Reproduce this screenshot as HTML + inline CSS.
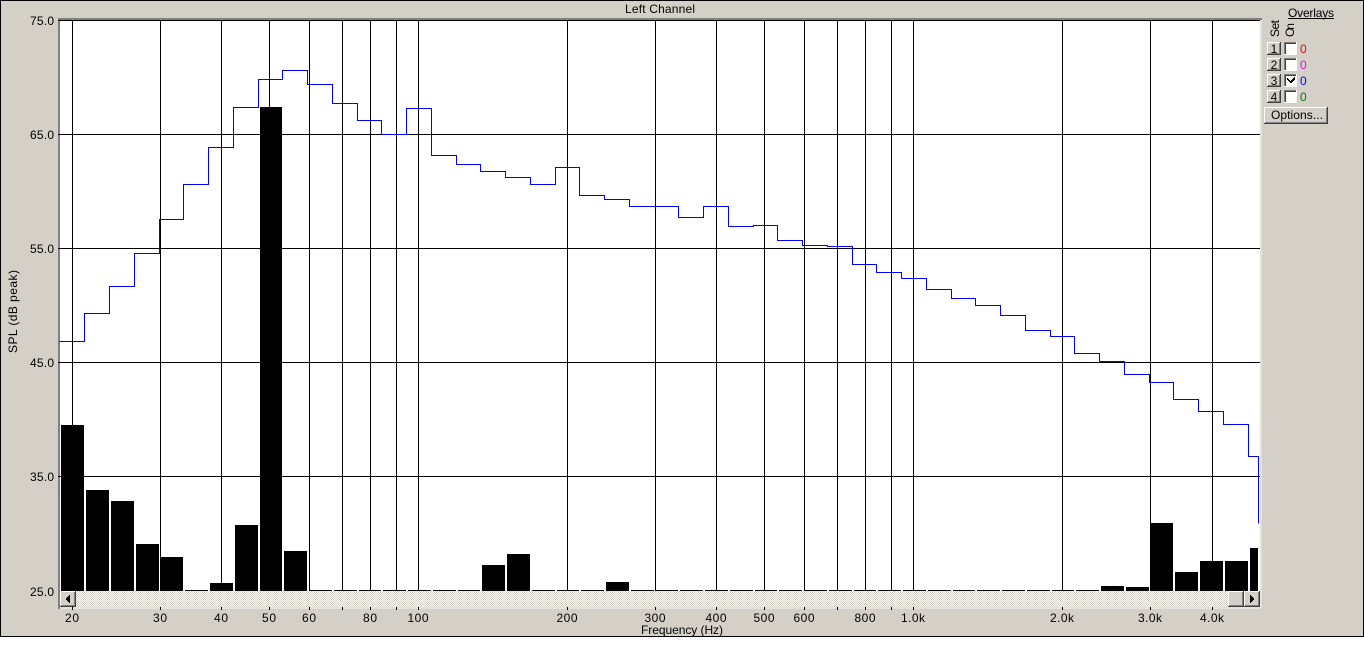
<!DOCTYPE html>
<html><head><meta charset="utf-8"><title>Left Channel</title>
<style>
html,body{margin:0;padding:0;background:#fff;width:1364px;height:649px;overflow:hidden}
svg{display:block;position:absolute;left:0;top:0}
text{font-family:"Liberation Sans",Arial,sans-serif;font-size:12px;fill:#000}
.c{text-anchor:middle}.r{text-anchor:end}
</style></head><body>
<svg width="1364" height="649" viewBox="0 0 1364 649" xmlns="http://www.w3.org/2000/svg">
<defs><pattern id="d" width="2" height="2" patternUnits="userSpaceOnUse"><rect width="2" height="2" fill="#fff"/><rect width="1" height="1" fill="#d4d0c8"/><rect x="1" y="1" width="1" height="1" fill="#d4d0c8"/></pattern></defs>
<g shape-rendering="crispEdges">
<rect width="1364" height="637" fill="#000"/>
<rect x="1" y="1" width="1362" height="635" fill="#d4d0c8"/>
<rect x="58" y="18" width="1204" height="591" fill="#e4e2dd"/>
<rect x="58" y="18" width="1204" height="2" fill="#808080"/>
<rect x="58" y="18" width="2" height="591" fill="#808080"/>
<rect x="60" y="20" width="1200" height="571" fill="#fff"/>
<rect x="60" y="591" width="1200" height="16" fill="url(#d)"/>
<path d="M58 20.5H1260M58 134.5H1260M58 248.5H1260M58 362.5H1260M58 476.5H1260" stroke="#000" fill="none"/>
<path d="M72.500 20V591M160.500 20V591M221.500 20V591M269.500 20V591M309.500 20V591M342.500 20V591M370.500 20V591M396.500 20V591M418.500 20V591M567.500 20V591M655.500 20V591M716.500 20V591M764.500 20V591M804.500 20V591M837.500 20V591M865.500 20V591M891.500 20V591M913.500 20V591M1062.500 20V591M1150.500 20V591M1212.500 20V591" stroke="#000" fill="none"/>
<path d="M72.500 607V610M160.500 607V610M221.500 607V610M269.500 607V610M309.500 607V610M342.500 607V610M370.500 607V610M396.500 607V610M418.500 607V610M567.500 607V610M655.500 607V610M716.500 607V610M764.500 607V610M804.500 607V610M837.500 607V610M865.500 607V610M891.500 607V610M913.500 607V610M1062.500 607V610M1150.500 607V610M1212.500 607V610" stroke="#000" fill="none"/>
<path fill="#000" d="M61 425H84V591H61ZM86 490H109V591H86ZM111 501H134V591H111ZM136 544H159V591H136ZM160 557H183V591H160ZM185 590H208V591H185ZM210 583H233V591H210ZM235 525H258V591H235ZM260 107H282V591H260ZM284 551H307V591H284ZM309 590H332V591H309ZM334 590H357V591H334ZM359 590H381V591H359ZM383 590H406V591H383ZM408 590H431V591H408ZM433 590H456V591H433ZM458 590H480V591H458ZM482 565H505V591H482ZM507 554H530V591H507ZM532 590H555V591H532ZM557 590H579V591H557ZM581 590H604V591H581ZM606 582H629V591H606ZM631 590H654V591H631ZM656 590H678V591H656ZM680 590H703V591H680ZM705 590H728V591H705ZM730 590H753V591H730ZM755 590H777V591H755ZM779 590H802V591H779ZM804 590H827V591H804ZM829 590H852V591H829ZM854 590H876V591H854ZM878 590H901V591H878ZM903 590H926V591H903ZM928 590H951V591H928ZM953 590H975V591H953ZM977 590H1000V591H977ZM1002 590H1025V591H1002ZM1027 590H1050V591H1027ZM1052 590H1074V591H1052ZM1076 590H1099V591H1076ZM1101 586H1124V591H1101ZM1126 587H1149V591H1126ZM1150 523H1173V591H1150ZM1175 572H1198V591H1175ZM1200 561H1223V591H1200ZM1225 561H1248V591H1225ZM1250 548H1258V591H1250Z"/>
<path transform="translate(.5 .5)" fill="none" stroke="#0000ff" d="M59 341H84V313H109V286H134V253H159V219H183V184H208V147H233V107H258V79H282V70H307V84H332V103H357V120H381V134H406V108H431V155H456V164H480V171H505V177H530V184H555V167H579V195H604V199H629V206H678V217H703V206H728V226H753V225H777V240H802V245H827V246H852V264H876V272H901V278H926V289H951V298H975V305H1000V315H1025V330H1050V336H1074V353H1099V361H1124V374H1149V382H1173V399H1198V411H1223V424H1248V456H1258V523"/>
<!-- scrollbar buttons -->
<g>
<rect x="60" y="591" width="16" height="16" fill="#404040"/><rect x="60" y="591" width="15" height="15" fill="#fff"/><rect x="61" y="592" width="14" height="14" fill="#808080"/><rect x="61" y="592" width="13" height="13" fill="#d4d0c8"/>
<rect x="1228" y="591" width="16" height="16" fill="#404040"/><rect x="1228" y="591" width="15" height="15" fill="#fff"/><rect x="1229" y="592" width="14" height="14" fill="#808080"/><rect x="1229" y="592" width="13" height="13" fill="#d4d0c8"/>
<rect x="1244" y="591" width="16" height="16" fill="#404040"/><rect x="1244" y="591" width="15" height="15" fill="#fff"/><rect x="1245" y="592" width="14" height="14" fill="#808080"/><rect x="1245" y="592" width="13" height="13" fill="#d4d0c8"/>
</g>
<path d="M70 595V603H69V602H68V601H67V600H66V598H67V597H68V596H69V595Z" fill="#000"/>
<path d="M1250 595V603H1251V602H1252V601H1253V600H1254V598H1253V597H1252V596H1251V595Z" fill="#000"/>
<!-- numbered buttons -->
<g>
<rect x="1267" y="42" width="14" height="13" fill="#404040"/><rect x="1267" y="42" width="13" height="12" fill="#fff"/><rect x="1268" y="43" width="12" height="11" fill="#808080"/><rect x="1268" y="43" width="11" height="10" fill="#d4d0c8"/>
<rect x="1267" y="58" width="14" height="13" fill="#404040"/><rect x="1267" y="58" width="13" height="12" fill="#fff"/><rect x="1268" y="59" width="12" height="11" fill="#808080"/><rect x="1268" y="59" width="11" height="10" fill="#d4d0c8"/>
<rect x="1267" y="74" width="14" height="13" fill="#404040"/><rect x="1267" y="74" width="13" height="12" fill="#fff"/><rect x="1268" y="75" width="12" height="11" fill="#808080"/><rect x="1268" y="75" width="11" height="10" fill="#d4d0c8"/>
<rect x="1267" y="90" width="14" height="13" fill="#404040"/><rect x="1267" y="90" width="13" height="12" fill="#fff"/><rect x="1268" y="91" width="12" height="11" fill="#808080"/><rect x="1268" y="91" width="11" height="10" fill="#d4d0c8"/>
</g>
<!-- checkboxes -->
<g>
<rect x="1284" y="42" width="13" height="13" fill="#fff"/><rect x="1284" y="42" width="12" height="12" fill="#808080"/><rect x="1285" y="43" width="11" height="11" fill="#404040"/><rect x="1286" y="44" width="10" height="10" fill="#fff"/>
<rect x="1284" y="58" width="13" height="13" fill="#fff"/><rect x="1284" y="58" width="12" height="12" fill="#808080"/><rect x="1285" y="59" width="11" height="11" fill="#404040"/><rect x="1286" y="60" width="10" height="10" fill="#fff"/>
<rect x="1284" y="74" width="13" height="13" fill="#fff"/><rect x="1284" y="74" width="12" height="12" fill="#808080"/><rect x="1285" y="75" width="11" height="11" fill="#404040"/><rect x="1286" y="76" width="10" height="10" fill="#fff"/>
<rect x="1284" y="90" width="13" height="13" fill="#fff"/><rect x="1284" y="90" width="12" height="12" fill="#808080"/><rect x="1285" y="91" width="11" height="11" fill="#404040"/><rect x="1286" y="92" width="10" height="10" fill="#fff"/>
</g>
<path d="M1288 79h1v1h1v1h1v-1h1v-1h1v-1h1v-1h1v3h-1v1h-1v1h-1v1h-2v-1h-1v-1h-1v-1h-1v-2h1z" fill="#000"/>
<!-- options button -->
<rect x="1264" y="107" width="64" height="17" fill="#404040"/><rect x="1264" y="107" width="63" height="16" fill="#fff"/><rect x="1265" y="108" width="62" height="15" fill="#808080"/><rect x="1265" y="108" width="61" height="14" fill="#d4d0c8"/>
<rect x="1288" y="18" width="46" height="1" fill="#000"/>
</g>
<g>
<text x="54" y="25" class="r" textLength="24">75.0</text>
<text x="54" y="139" class="r" textLength="24">65.0</text>
<text x="54" y="253" class="r" textLength="24">55.0</text>
<text x="54" y="367" class="r" textLength="24">45.0</text>
<text x="54" y="481" class="r" textLength="24">35.0</text>
<text x="54" y="596" class="r" textLength="24">25.0</text>
<text x="72" y="622" class="c" textLength="14">20</text>
<text x="160" y="622" class="c" textLength="14">30</text>
<text x="221" y="622" class="c" textLength="14">40</text>
<text x="269" y="622" class="c" textLength="14">50</text>
<text x="309" y="622" class="c" textLength="14">60</text>
<text x="370" y="622" class="c" textLength="14">80</text>
<text x="418" y="622" class="c" textLength="21">100</text>
<text x="567" y="622" class="c" textLength="21">200</text>
<text x="655" y="622" class="c" textLength="21">300</text>
<text x="716" y="622" class="c" textLength="21">400</text>
<text x="764" y="622" class="c" textLength="21">500</text>
<text x="804" y="622" class="c" textLength="21">600</text>
<text x="865" y="622" class="c" textLength="21">800</text>
<text x="913" y="622" class="c" textLength="24">1.0k</text>
<text x="1062" y="622" class="c" textLength="24">2.0k</text>
<text x="1150" y="622" class="c" textLength="24">3.0k</text>
<text x="1212" y="622" class="c" textLength="24">4.0k</text>
<text x="682" y="634" class="c" textLength="82">Frequency (Hz)</text>
<text x="660" y="13" class="c" textLength="70">Left Channel</text>
<text transform="translate(17 353) rotate(-90)" textLength="83">SPL (dB peak)</text>
<text x="1288" y="17" textLength="46">Overlays</text>
<text transform="translate(1279 37) rotate(-90)" textLength="17">Set</text>
<text transform="translate(1294 37) rotate(-90)" textLength="14">On</text>
<text x="1274" y="53" class="c">1</text>
<text x="1274" y="69" class="c">2</text>
<text x="1274" y="85" class="c">3</text>
<text x="1274" y="101" class="c">4</text>
<text x="1300" y="53" style="fill:#ff0000">0</text>
<text x="1300" y="69" style="fill:#ff00ff">0</text>
<text x="1300" y="85" style="fill:#0000ff">0</text>
<text x="1300" y="101" style="fill:#008000">0</text>
<text x="1271" y="119" textLength="52">Options...</text>
</g>
</svg>
</body></html>
